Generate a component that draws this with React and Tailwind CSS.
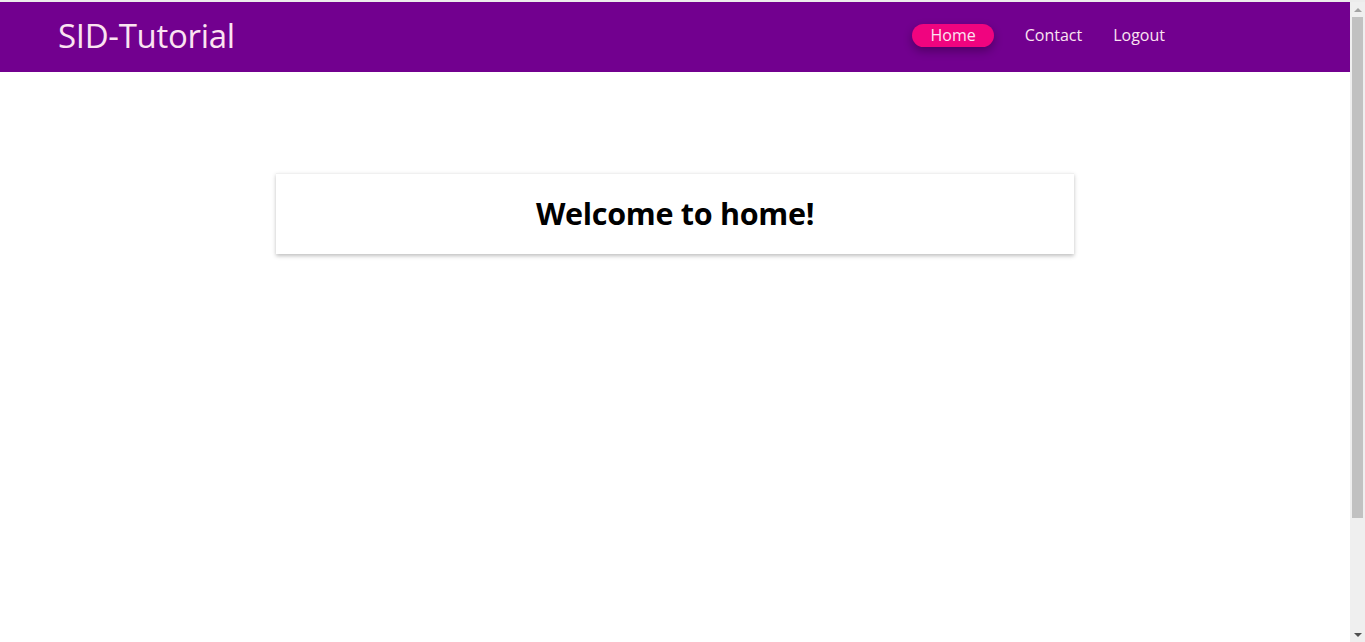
export default function App() {
  const links = ["Home", "Contact", "Logout"];

  return (
    <div className="h-screen flex flex-col bg-white font-['Open_Sans',sans-serif] overflow-hidden">
      <div className="h-[2px] bg-[#ececec] shrink-0" />
      <div className="flex-1 flex min-h-0">
        <div className="flex-1 min-w-0">
          <nav className="h-[70px] bg-[#72008f] flex items-center pl-[58px] pr-[185px] pb-[3px]">
            <span className="text-[33px] text-[#fbe3f1] tracking-[-0.3px]">SID-Tutorial</span>
            <ul className="ml-auto flex items-center gap-[31px]">
              {links.map((l, i) => (
                <li key={l}>
                  <a
                    href="#"
                    className={
                      i === 0
                        ? "block px-[18px] h-[23px] leading-[23px] rounded-full bg-[#f0047f] text-[16px] text-[#fbe3f1] shadow-[0_4px_10px_rgba(0,0,0,0.3)]"
                        : "block h-[23px] leading-[23px] text-[16px] text-[#fbe3f1]"
                    }
                  >
                    {l}
                  </a>
                </li>
              ))}
            </ul>
          </nav>

          <main className="flex justify-center pt-[101px]">
            <div className="w-[798px] h-[81px] flex items-center justify-center bg-white shadow-[0_2px_4px_rgba(0,0,0,0.25)] border-t border-[#f0f0f0]">
              <h1 className="text-[30.5px] font-bold text-black tracking-[-0.3px]">Welcome to home!</h1>
            </div>
          </main>
        </div>

        <div className="w-[15px] shrink-0 bg-[#efefef] flex flex-col items-center">
          <div className="h-[15px] flex items-center justify-center">
            <div className="w-0 h-0 border-x-[4px] border-x-transparent border-b-[4px] border-b-[#a3a3a3]" />
          </div>
          <div className="h-[501px] w-[11px] bg-[#c1c1c1]" />
          <div className="flex-1" />
          <div className="h-[15px] flex items-center justify-center">
            <div className="w-0 h-0 border-x-[4px] border-x-transparent border-t-[4px] border-t-[#505050]" />
          </div>
        </div>
      </div>
    </div>
  );
}
